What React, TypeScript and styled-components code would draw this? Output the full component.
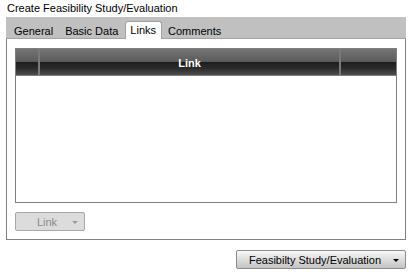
import * as React from 'react';
import styled, { createGlobalStyle } from 'styled-components';

const GlobalStyle = createGlobalStyle`
  body {
    margin: 0;
    background: #fff;
    font-family: "Liberation Sans", Arial, sans-serif;
    font-size: 11px;
    color: #000;
  }
`;

const Page = styled.div`
  width: 410px;
  height: 274px;
  padding: 2px 4px 0 6px;
  box-sizing: border-box;
`;

const Title = styled.div`
  height: 15px;
  line-height: 13px;
  padding-left: 1px;
`;

const TabBar = styled.div`
  display: flex;
  align-items: flex-end;
  height: 21px;
  background: #c0c0c0;
  border-bottom: 1px solid #a4a4a4;
  padding-left: 3px;
  gap: 1px;
`;

const Tab = styled.div<{ $active?: boolean }>`
  line-height: 16px;
  padding: 0 5px 0 4px;
  box-sizing: border-box;
  font-size: 11px;
  margin-bottom: -1px;
  border: 1px solid ${p => (p.$active ? '#a0a0a0' : 'transparent')};
  border-bottom: none;
  border-radius: 3px 3px 0 0;
  background: ${p => (p.$active ? '#fff' : 'transparent')};
  height: ${p => (p.$active ? '18px' : '17px')};
`;

const Panel = styled.div`
  border: 1px solid #808080;
  border-top: none;
  padding: 9px 8px 8px 8px;
  height: 201px;
  box-sizing: border-box;
  display: flex;
  flex-direction: column;
  gap: 9px;
`;

const Grid = styled.div`
  width: 382px;
  height: 155px;
  border: 1px solid #808080;
  box-sizing: border-box;
  background: #fff;
`;

const HeaderRow = styled.div`
  display: grid;
  grid-template-columns: 24px 1fr 55px;
  height: 26px;
  background: linear-gradient(#747474 0%, #5c5c5c 48%, #1c1c1c 50%, #2c2c2c 75%, #4c4c4c 100%);
  border-bottom: 1px solid #808080;
`;

const HeaderCell = styled.div`
  border-right: 2px solid #7a7a7a;
  color: #fff;
  font-weight: bold;
  font-size: 11px;
  display: flex;
  align-items: center;
  justify-content: center;
  padding-top: 2px;
  &:last-child {
    border-right: none;
  }
`;

const SplitButton = styled.div<{ $disabled?: boolean }>`
  display: flex;
  align-items: center;
  height: 19px;
  box-sizing: border-box;
  font-size: 11px;
  border: 1px solid ${p => (p.$disabled ? '#a8a8a8' : '#8c8c8c')};
  border-radius: 2px;
  color: ${p => (p.$disabled ? '#8a8a8a' : '#000')};
  background: ${p =>
    p.$disabled ? '#dcdcdc' : 'linear-gradient(#f8f8f8 0%, #e2e2e2 40%, #c4c4c4 100%)'};
`;

const ButtonLabel = styled.span`
  flex: 1;
  text-align: center;
`;

const Arrow = styled.span<{ $disabled?: boolean }>`
  width: 0;
  height: 0;
  border-left: 3px solid transparent;
  border-right: 3px solid transparent;
  border-top: 3px solid ${p => (p.$disabled ? '#9a9a9a' : '#000')};
  margin: 1px 6px 0 4px;
`;

const LinkButton = styled(SplitButton)`
  width: 70px;
  padding-left: 10px;
`;

const Footer = styled.div`
  display: flex;
  justify-content: flex-end;
  margin-top: 10px;
`;

const TypeButton = styled(SplitButton)`
  width: 170px;
  padding-left: 4px;
`;

export default function App() {
  return (
    <Page>
      <GlobalStyle />
      <Title>Create Feasibility Study/Evaluation</Title>
      <TabBar>
        <Tab>General</Tab>
        <Tab>Basic Data</Tab>
        <Tab $active>Links</Tab>
        <Tab>Comments</Tab>
      </TabBar>
      <Panel>
        <Grid>
          <HeaderRow>
            <HeaderCell />
            <HeaderCell>Link</HeaderCell>
            <HeaderCell />
          </HeaderRow>
        </Grid>
        <LinkButton $disabled>
          <ButtonLabel>Link</ButtonLabel>
          <Arrow $disabled />
        </LinkButton>
      </Panel>
      <Footer>
        <TypeButton>
          <ButtonLabel>Feasibilty Study/Evaluation</ButtonLabel>
          <Arrow />
        </TypeButton>
      </Footer>
    </Page>
  );
}
